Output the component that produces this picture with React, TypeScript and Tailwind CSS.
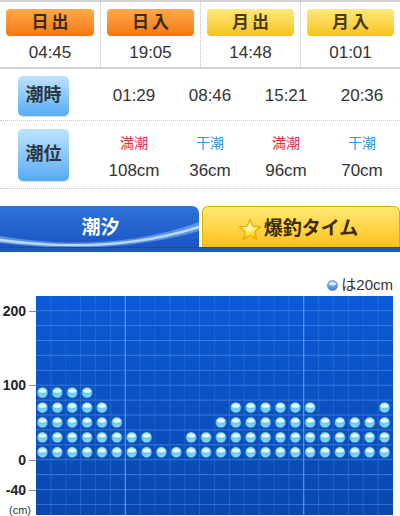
import React from 'react';

/* ─── Data ─────────────────────────────────────────────────────────────────── */
const SUN_MOON = [
  { label: '日出', time: '04:45', moon: false },
  { label: '日入', time: '19:05', moon: false },
  { label: '月出', time: '14:48', moon: true },
  { label: '月入', time: '01:01', moon: true },
];

const TIDES = [
  { time: '01:29', type: '満潮', level: '108cm' },
  { time: '08:46', type: '干潮', level: '36cm' },
  { time: '15:21', type: '満潮', level: '96cm' },
  { time: '20:36', type: '干潮', level: '70cm' },
];

// one bubble = 20cm, one column per hour
const COUNTS = [5, 5, 5, 5, 4, 3, 2, 2, 1, 1, 2, 2, 3, 4, 4, 4, 4, 4, 4, 3, 3, 3, 3, 4];

/* ─── Chart geometry ───────────────────────────────────────────────────────── */
const CW_TOTAL = 357;
const CH = 219;
const COLW = CW_TOTAL / 24;
const ROWH = 14.9;
const TOP_LINE = 14.7; // y of the 200cm line
const Y0 = TOP_LINE + ROWH * 10; // y of 0cm

const AXIS = [
  { v: '200', y: TOP_LINE },
  { v: '100', y: TOP_LINE + ROWH * 5 },
  { v: '0', y: Y0 },
  { v: '-40', y: Y0 + ROWH * 2 },
];

function Bubble({ cx, cy, r = 5.4 }: { cx: number; cy: number; r?: number }) {
  return (
    <g>
      <circle cx={cx} cy={cy} r={r} fill="url(#ball)" stroke="#1b6fc0" strokeWidth={0.6} />
      <ellipse cx={cx} cy={cy - r * 0.3} rx={r * 0.75} ry={r * 0.34} fill="#ffffff" opacity={0.85} />
    </g>
  );
}

function TideChart() {
  const hLines = Array.from({ length: 14 }, (_, k) => TOP_LINE + ROWH * k);
  const vLines = Array.from({ length: 23 }, (_, k) => COLW * (k + 1));
  return (
    <svg width={CW_TOTAL} height={CH} className="block shrink-0">
      <defs>
        <linearGradient id="chartbg" x1="0" y1="0" x2="0" y2="1">
          <stop offset="0" stopColor="#0b5ad6" />
          <stop offset="1" stopColor="#0a47ad" />
        </linearGradient>
        <linearGradient id="ball" x1="0" y1="0" x2="0" y2="1">
          <stop offset="0" stopColor="#bdeeff" />
          <stop offset="0.45" stopColor="#62c6f2" />
          <stop offset="1" stopColor="#8fdcfb" />
        </linearGradient>
      </defs>
      <rect width={CW_TOTAL} height={CH} fill="url(#chartbg)" />
      {hLines.map((y, i) => (
        <line key={'h' + i} x1={0} x2={CW_TOTAL} y1={y} y2={y} stroke="#4a8ae6" strokeWidth={1} opacity={0.7} />
      ))}
      {vLines.map((x, i) => {
        const bright = i === 5 || i === 17;
        return (
          <line key={'v' + i} x1={x} x2={x} y1={0} y2={CH}
            stroke={bright ? '#6fa9f2' : '#3f7fe0'} strokeWidth={1}
            opacity={bright ? 0.95 : i % 2 === 0 ? 0.5 : 0.35} />
        );
      })}
      {COUNTS.map((n, c) =>
        Array.from({ length: n }, (_, r) => (
          <Bubble key={c + '-' + r} cx={COLW * (c + 0.5) - 1} cy={Y0 - ROWH * (r + 0.5)} />
        ))
      )}
    </svg>
  );
}

/* ─── Pieces ───────────────────────────────────────────────────────────────── */
function Star() {
  return (
    <svg width={24} height={23} viewBox="0 0 24 23" className="shrink-0">
      <defs>
        <radialGradient id="starg" cx="0.45" cy="0.4" r="0.65">
          <stop offset="0" stopColor="#fffbd0" />
          <stop offset="0.5" stopColor="#ffe44a" />
          <stop offset="1" stopColor="#f2b800" />
        </radialGradient>
      </defs>
      <path d="M12 1.2 L15 8.2 L22.6 8.8 L16.8 13.8 L18.6 21.4 L12 17.4 L5.4 21.4 L7.2 13.8 L1.4 8.8 L9 8.2 Z"
        fill="url(#starg)" stroke="#e6a400" strokeWidth={1.1} strokeLinejoin="round" />
    </svg>
  );
}

function Swoosh() {
  return (
    <svg className="absolute inset-0" width={199} height={41} viewBox="0 0 199 41" preserveAspectRatio="none">
      <path d="M0 30 C60 40 130 41 199 16 L199 25 C130 45 60 44 0 37 Z" fill="#8cc4ff" opacity={0.5} />
      <path d="M0 32.5 C60 41 130 42 199 19.5 L199 22.5 C130 44 60 43 0 35.5 Z" fill="#dcefff" opacity={0.75} />
    </svg>
  );
}

/* ─── App ──────────────────────────────────────────────────────────────────── */
export default function App() {
  return (
    <div className="w-[400px] h-[516px] overflow-hidden bg-white text-[#333] font-['Liberation_Sans','Noto_Sans_CJK_JP',sans-serif]">
      {/* sun / moon */}
      <div className="grid grid-cols-4 border-t-2 border-b-2 border-[#d2d2d2]">
        {SUN_MOON.map((s, i) => (
          <div key={s.label}
            className={`flex flex-col pt-[7px] pb-[4px] ${i > 0 ? 'border-l border-dotted border-[#bdbdbd]' : ''}`}>
            <div className={`mx-[6px] h-[27px] rounded-[4px] flex items-center justify-center font-bold text-[17px] tracking-[3px] pl-[3px] ${
              s.moon
                ? 'bg-gradient-to-b from-[#ffe978] to-[#f7c300] text-[#4a3a14]'
                : 'bg-gradient-to-b from-[#ffa94a] to-[#f47800] text-[#3d2a1c]'
            }`}>
              {s.label}
            </div>
            <div className="mt-[7px] leading-[20px] text-[17px] text-center">{s.time}</div>
          </div>
        ))}
      </div>

      {/* tide times */}
      <div className="flex items-center h-[52px] pt-[2px] border-b border-dotted border-[#c4c4c4]">
        <div className="w-[96px] pl-[18px]">
          <div className="w-[51px] h-[40px] rounded-[5px] bg-gradient-to-b from-[#bfe3ff] to-[#54abf3] flex items-center justify-center text-[18px] font-bold text-[#2c3640] shadow-[0_1px_1px_rgba(0,0,0,0.15)]">
            潮時
          </div>
        </div>
        {TIDES.map(t => (
          <div key={t.time} className="w-[76px] text-center text-[17px]">{t.time}</div>
        ))}
      </div>

      {/* tide levels */}
      <div className="flex items-center h-[68px] border-b border-dotted border-[#c4c4c4]">
        <div className="w-[96px] pl-[18px]">
          <div className="w-[51px] h-[52px] rounded-[5px] bg-gradient-to-b from-[#bfe3ff] to-[#54abf3] flex items-center justify-center text-[18px] font-bold text-[#2c3640] shadow-[0_1px_1px_rgba(0,0,0,0.15)]">
            潮位
          </div>
        </div>
        {TIDES.map(t => (
          <div key={t.time} className="w-[76px] flex flex-col items-center pt-[6px]">
            <span className={`text-[14px] leading-[18px] ${t.type === '満潮' ? 'text-[#e2343c]' : 'text-[#2b9be0]'}`}>{t.type}</span>
            <span className="mt-[9px] text-[17px] leading-[20px]">{t.level}</span>
          </div>
        ))}
      </div>

      {/* tabs */}
      <div className="mt-[17px]">
        <div className="flex h-[41px] items-stretch">
          <div className="relative w-[199px] rounded-tr-[7px] overflow-hidden bg-gradient-to-b from-[#2f73da] to-[#1b55c2] flex items-center justify-center">
            <Swoosh />
            <span className="relative text-white font-bold text-[19px] pl-[2px] mt-[3px]">潮汐</span>
          </div>
          <div className="ml-[3px] flex-1 rounded-t-[6px] border border-b-0 border-[#e3aa00] bg-gradient-to-b from-[#ffe970] to-[#ffc200] flex items-center justify-center gap-[2px] pr-[6px] pt-[4px]">
            <Star />
            <span className="font-bold text-[19px] text-[#3e2a06]">爆釣タイム</span>
          </div>
        </div>
        <div className="h-[5px] bg-[#1d58c3] border-t border-[#164aa8]" />
      </div>

      {/* legend */}
      <div className="h-[44px] flex items-end justify-end pr-[7px] pb-[1px]">
        <div className="flex items-center gap-[3px] leading-[20px]">
          <svg width={11} height={11} viewBox="0 0 11 11">
            <defs>
              <linearGradient id="lg" x1="0" y1="0" x2="0" y2="1">
                <stop offset="0" stopColor="#a9d6ff" />
                <stop offset="1" stopColor="#2d7fd6" />
              </linearGradient>
            </defs>
            <circle cx={5.5} cy={5.5} r={5} fill="url(#lg)" stroke="#2a6ab8" strokeWidth={0.6} />
            <ellipse cx={5.5} cy={3.8} rx={3.4} ry={1.6} fill="#fff" opacity={0.8} />
          </svg>
          <span className="text-[15px] text-[#333]">は20cm</span>
        </div>
      </div>

      {/* chart */}
      <div className="flex">
        <div className="relative w-[36px] h-[219px] shrink-0">
          {AXIS.map(a => (
            <div key={a.v}>
              <span className="absolute right-[10px] text-[14px] font-bold leading-[16px] text-[#222]" style={{ top: a.y - 8 }}>{a.v}</span>
              <span className="absolute right-0 w-[7px] h-px bg-[#7d8da6]" style={{ top: a.y }} />
            </div>
          ))}
          <span className="absolute left-[9px] top-[207px] text-[11px] leading-[14px] text-[#333]">(cm)</span>
        </div>
        <TideChart />
      </div>
    </div>
  );
}
